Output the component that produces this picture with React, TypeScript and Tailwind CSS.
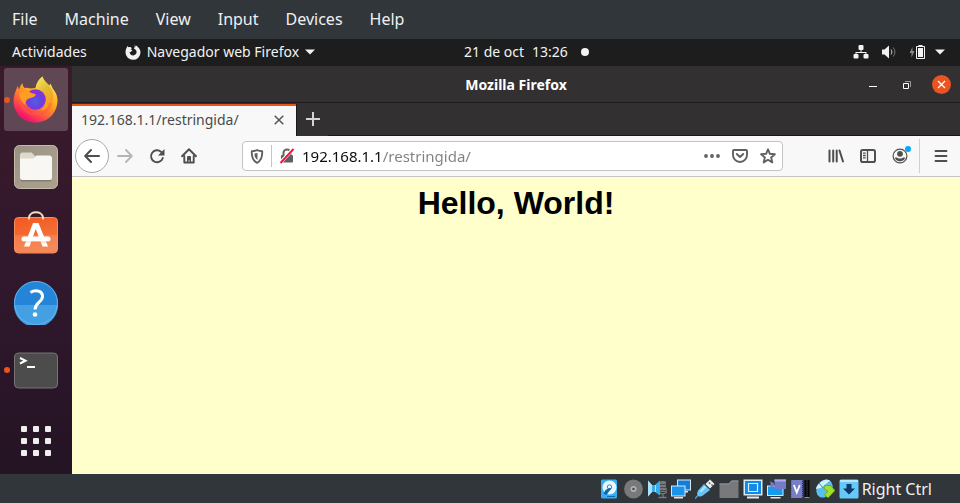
import { useState, type ReactNode } from "react";

const stroke = {
  fill: "none",
  stroke: "currentColor",
  strokeLinecap: "round",
  strokeLinejoin: "round",
} as const;

function HostMenu() {
  const items = ["File", "Machine", "View", "Input", "Devices", "Help"];
  return (
    <nav
      aria-label="Virtual machine"
      className="flex h-[39px] shrink-0 items-center gap-[27px] bg-[#31363b] px-3 pb-[2px] text-base text-[#eff0f1]"
    >
      {items.map((item) => (
        <button key={item} type="button">
          {item}
        </button>
      ))}
    </nav>
  );
}

function FirefoxGlyph() {
  return (
    <svg width="16" height="16" viewBox="0 0 16 16" aria-hidden="true">
      <path
        fill="#f2f2f2"
        d="M9.800.2c.4.900.6 1.600.7 2.500l1.500-1.300c.3.900.6 1.500 1.300 2.200 1.300 1.300 2.200 2.800 2.200 4.700A7.400 7.400 0 0 1 8 15.800 7.400 7.400 0 0 1 .5 8.500C.5 6 1.200 4 2.800 1.800c0 .6.1 1 .4 1.500C4 3 5 2.900 5.800 3.200L7 4.600c-.6.1-1.100.4-1.400.9.8.1 1.400.400 1.800.900L5.800 7.700c-.4.300-.8.200-1.200 0 0 2.300 1.500 3.700 3.500 3.700 2.100 0 3.600-1.500 3.500-3.600C11.500 6.200 10.500 5.200 9 4.700c.7-1.400.9-3 .8-4.500z"
      />
    </svg>
  );
}

function Caret() {
  return (
    <svg width="10" height="6" viewBox="0 0 10 6" aria-hidden="true">
      <path fill="#f2f2f2" d="M0 .5h10L5 5.500z" />
    </svg>
  );
}

function TopBar() {
  return (
    <header className="grid h-[27px] shrink-0 grid-cols-[464fr_125fr_371fr] items-center bg-[#1d1d1d] pb-px text-sm text-[#f2f2f2]">
      <div className="flex items-center gap-[38px] pl-3">
        <button type="button">Actividades</button>
        <button type="button" className="flex items-center gap-[6px] whitespace-nowrap">
          <FirefoxGlyph />
          Navegador web Firefox
          <Caret />
        </button>
      </div>
      <button type="button" className="flex items-center justify-between whitespace-nowrap">
        <span className="flex gap-2">
          <span>21 de oct</span>
          <span>13:26</span>
        </span>
        <span className="size-2 rounded-full bg-[#f2f2f2]" />
      </button>
      <button type="button" aria-label="Sistema" className="flex items-center justify-end pr-[15px]">
        <svg width="16" height="16" viewBox="0 0 16 16" fill="#f2f2f2" className="mr-3" aria-hidden="true">
          <rect x="5.500" y="1" width="5" height="5" rx="1" />
          <rect x=".5" y="10" width="5" height="4.500" rx="1" />
          <rect x="10.500" y="10" width="5" height="4.500" rx="1" />
          <path d="M7.500 5h1v3h5v3h-1V9h-9v2h-1V8h5z" />
        </svg>
        <svg width="16" height="16" viewBox="0 0 16 16" className="mr-3" aria-hidden="true">
          <path fill="#f2f2f2" d="M1 5.500h2.500L8 1.500v13l-4.500-4H1z" />
          <path fill="none" stroke="#c8c8c8" d="M10 5.500q2 2.500 0 5" />
          <path fill="none" stroke="#777" d="M12.200 3.500q3.500 4.500 0 9" />
        </svg>
        <svg width="16" height="16" viewBox="0 0 16 16" className="mr-[10px]" aria-hidden="true">
          <path fill="#888" d="M3.500 3v4H5.500L2.500 13.500V9H.5z" />
          <path fill="none" stroke="#f2f2f2" d="M7.500 2.500h8v12h-8zM9.500 1.500h4" />
          <path fill="#f2f2f2" d="M9 4h5v9H9z" />
        </svg>
        <Caret />
      </button>
    </header>
  );
}

function FirefoxLogo() {
  return (
    <svg width="46" height="48" viewBox="0 0 46 48" aria-hidden="true">
      <defs>
        <linearGradient id="flame" x1=".85" y1="0" x2=".25" y2="1">
          <stop offset="0" stopColor="#fff36e" />
          <stop offset=".4" stopColor="#ffb020" />
          <stop offset=".65" stopColor="#ff6a36" />
          <stop offset=".92" stopColor="#f5156c" />
        </linearGradient>
        <radialGradient id="globe" cx=".5" cy=".6" r=".65">
          <stop offset="0" stopColor="#4f5fe6" />
          <stop offset=".5" stopColor="#6a40df" />
          <stop offset="1" stopColor="#9a2ccb" />
        </radialGradient>
        <linearGradient id="crest" x1="0" y1="0" x2=".5" y2="1">
          <stop offset="0" stopColor="#f8ec62" />
          <stop offset=".5" stopColor="#e2bd35" />
          <stop offset="1" stopColor="#ff9a1f" />
        </linearGradient>
      </defs>
      <path
        fill="url(#flame)"
        d="M29.500.5c1 4 4 6 7 9l1-2c1 2 1.500 4 3 6 2.500 3 4 7 4 10.500C44.500 37 35 46.500 22.500 46.500S.5 37 .5 25C.5 19 3 14 5 9.500c0 2 .5 3 1 4 1-3 2-5 3.500-6.500 0 2 .5 3.500 2 5 2-.5 4 0 6 .5l5-.5c1-4.500 3-8.500 7-11.500z"
      />
      <path
        fill="url(#crest)"
        d="M29.500.5c1 4 5 7 8 11 5 7 3 17-3 21-3 2-5 2-6 1 4-3 5-7 4-12-1-5-6-8-10-9.500 1-5 3-8.500 7-11.500z"
      />
      <circle cx="22.500" cy="23.500" r="10.300" fill="url(#globe)" />
      <path fill="none" stroke="#ff5844" strokeWidth="3" d="M7 25c2 8 8 13 16 13 7 0 13-4 15-11" opacity=".5" />
      <path
        fill="#ff9d22"
        d="M6 18c3-3 7-4.500 10-2.500 2 1.500 4.500 2 7 3-1 2.500-3 3-5.500 3.500-4 1-5.500 3.500-5 7C9 27 7 23 6 18z"
      />
    </svg>
  );
}

function FilesLogo() {
  return (
    <svg width="46" height="46" viewBox="0 0 46 46" aria-hidden="true">
      <defs>
        <linearGradient id="drawer" x1="0" y1="0" x2="1" y2="1">
          <stop offset="0" stopColor="#989183" />
          <stop offset=".5" stopColor="#a49b8a" />
          <stop offset="1" stopColor="#aaa18f" />
        </linearGradient>
      </defs>
      <rect x="1.500" y="2.500" width="43" height="43" rx="5" fill="url(#drawer)" stroke="#c3bba9" />
      <path fill="#ded9cb" d="M7 12a2.500 2.500 0 0 1 2.500-2.500h9L23 14v10H7z" />
      <path fill="#6e685c" opacity=".6" d="M8 35h30v3.500H8z" />
      <path fill="#f8f7f4" d="M7 15.500h13.500l3-3H36a3 3 0 0 1 3 3v19a2.500 2.500 0 0 1-2.500 2.500h-27A2.500 2.500 0 0 1 7 34z" />
    </svg>
  );
}

function SoftwareLogo() {
  return (
    <svg width="46" height="46" viewBox="0 0 46 46" aria-hidden="true">
      <defs>
        <linearGradient id="bag" x1="0" y1="0" x2=".3" y2="1">
          <stop offset="0" stopColor="#f4581f" />
          <stop offset="1" stopColor="#f37a42" />
        </linearGradient>
      </defs>
      <rect x="1.500" y="6.500" width="43" height="35.500" rx="4" fill="url(#bag)" stroke="#f78e5f" />
      <path fill="#fff" opacity=".12" d="M2 24h42v14a3 3 0 0 1-3 3H5a3 3 0 0 1-3-3z" />
      <path fill="none" stroke="#f6dfb8" strokeWidth="2" d="M16 8.500V6.500c1-7 13-7 14 0v2" />
      <path fill="#fff" d="M20 12h5.500l9.500 23.500h-5.500L22.700 18 16.500 35.500H11z" />
      <rect x="8.500" y="25.500" width="29" height="5" rx="2.500" fill="#fff" />
      <path stroke="#f3743b" strokeWidth=".6" opacity=".6" d="M11 31h24" />
    </svg>
  );
}

function HelpLogo() {
  return (
    <svg width="46" height="46" viewBox="0 0 46 46" aria-hidden="true">
      <circle cx="23" cy="24" r="22" fill="#2484d8" />
      <path fill="#45a0e3" d="M1 26h44a22 22 0 0 1-44 0z" />
      <circle cx="23" cy="24" r="21.500" fill="none" stroke="#5fb4ee" />
      <path fill="none" stroke="#fff" strokeWidth="3" d="M17.500 13.500c3.500-2.500 12-3 12 4 0 5.500-7.500 6-7.500 13" />
      <circle cx="22" cy="35.500" r="2.300" fill="#fff" />
    </svg>
  );
}

function TerminalLogo() {
  return (
    <svg width="46" height="38" viewBox="0 0 46 38" aria-hidden="true">
      <rect x="1.500" y="2" width="43" height="35" rx="4" fill="#4c4c4c" stroke="#747474" />
      <path fill="none" stroke="#fff" strokeWidth="2" d="M7 7l5.500 2.700L7 12.500M14 16h8" />
    </svg>
  );
}

function DockItem({ label, running, children }: { label: string; running?: boolean; children: ReactNode }) {
  return (
    <button type="button" aria-label={label} className="relative flex h-[68px] items-center justify-center">
      {running && <span className="absolute left-1 size-[6px] rounded-full bg-[#e95420]" />}
      {children}
    </button>
  );
}

function Dock() {
  return (
    <aside
      aria-label="Dock"
      className="flex w-[72px] shrink-0 flex-col bg-linear-to-b from-[#3a1a2a] via-[#31182d] to-[#241424]"
    >
      <button
        type="button"
        aria-label="Firefox"
        className="relative mx-1 mt-[2px] mb-px flex h-[63px] items-center justify-center rounded-[3px] bg-white/20"
      >
        <span className="absolute left-0 size-[6px] rounded-full bg-[#e95420]" />
        <FirefoxLogo />
      </button>
      <DockItem label="Archivos">
        <FilesLogo />
      </DockItem>
      <DockItem label="Software de Ubuntu">
        <SoftwareLogo />
      </DockItem>
      <DockItem label="Ayuda">
        <HelpLogo />
      </DockItem>
      <DockItem label="Terminal" running>
        <TerminalLogo />
      </DockItem>
      <button type="button" aria-label="Mostrar aplicaciones" className="mt-auto flex h-[66px] items-center justify-center">
        <span className="grid grid-cols-3 gap-[6px]">
          {Array.from({ length: 9 }, (_, i) => (
            <span key={i} className="size-[6px] rounded-[1px] bg-[#eeeeec]" />
          ))}
        </span>
      </button>
    </aside>
  );
}

function TitleBar() {
  return (
    <div className="grid h-[37px] shrink-0 grid-cols-[1fr_auto_1fr] items-center border-b border-[#1f1c1d] bg-[#333031] pt-px text-white">
      <span />
      <span className="text-sm font-bold">Mozilla Firefox</span>
      <div className="flex items-center justify-end pr-[9px]">
        <button type="button" aria-label="Minimizar" className="flex w-[34px] justify-center">
          <svg width="10" height="10" viewBox="0 0 10 10" aria-hidden="true">
            <path stroke="#fff" d="M1 6.500h8" />
          </svg>
        </button>
        <button type="button" aria-label="Restaurar" className="flex w-[34px] justify-center">
          <svg width="10" height="10" viewBox="0 0 10 10" fill="none" aria-hidden="true">
            <path stroke="#fff" d="M1.500 3.500h5v5h-5z" />
            <path stroke="#999" d="M3 1.500h5.500V7" />
          </svg>
        </button>
        <button
          type="button"
          aria-label="Cerrar"
          className="ml-2 flex size-[19px] items-center justify-center rounded-full bg-[#e95420]"
        >
          <svg width="9" height="9" viewBox="0 0 9 9" aria-hidden="true">
            <path stroke="#fff" strokeWidth="1.300" d="M1 1l7 7M8 1L1 8" />
          </svg>
        </button>
      </div>
    </div>
  );
}

function TabStrip() {
  return (
    <div className="flex h-[33px] shrink-0 bg-[#333031] pt-px">
      <div className="flex w-[224px] items-center justify-between border-t-2 border-[#e95420] bg-[#f8f8f8] pr-3 pb-[2px] pl-[9px] text-sm text-[#4a4a4a]">
        <span>192.168.1.1/restringida/</span>
        <button type="button" aria-label="Cerrar pestaña">
          <svg width="10" height="10" viewBox="0 0 10 10" aria-hidden="true">
            <path stroke="#555" strokeWidth="1.500" d="M.7.7l8.600 8.600M9.300.7L.7 9.300" />
          </svg>
        </button>
      </div>
      <button
        type="button"
        aria-label="Nueva pestaña"
        className="flex w-8 items-center justify-center border-l border-[#1a1819] pb-[2px]"
      >
        <svg width="14" height="14" viewBox="0 0 14 14" aria-hidden="true">
          <path stroke="#d4d4d4" strokeWidth="2" d="M7 0v14M0 7h14" />
        </svg>
      </button>
      <div className="flex-1 border-b border-[#1a1819]" />
    </div>
  );
}

function ToolButton({ label, children }: { label: string; children: ReactNode }) {
  return (
    <button type="button" aria-label={label} className="relative flex h-8 w-8 shrink-0 items-center justify-center">
      {children}
    </button>
  );
}

function AddressBar() {
  const [address, setAddress] = useState("192.168.1.1/restringida/");
  return (
    <div className="mx-[37px] flex h-[30px] min-w-0 flex-1 items-center rounded-[4px] border border-[#c4c4c4] bg-white text-[#606060]">
      <button type="button" aria-label="Protección" className="flex w-7 justify-center">
        <svg width="14" height="15" viewBox="0 0 14 15" aria-hidden="true">
          <path {...stroke} strokeWidth="1.900" d="M7 1.200c2 .8 3.500 1 5.200 1 .3 6-.8 9.300-5.200 11.600C2.600 11.500 1.500 8.200 1.800 2.200c1.700 0 3.200-.2 5.200-1z" />
          <path fill="currentColor" d="M7.500 4v7C5.200 9.500 4.500 7.500 4.500 4.500z" />
        </svg>
      </button>
      <span className="h-[22px] w-px bg-[#c4c4c4]" />
      <button type="button" aria-label="Conexión no segura" className="flex w-[30px] justify-center">
        <svg width="16" height="16" viewBox="0 0 16 16" aria-hidden="true">
          <path fill="none" stroke="currentColor" strokeWidth="2" d="M4.500 8V5a3.500 3.500 0 0 1 7 0v3" />
          <rect x="2" y="7" width="12" height="7.500" rx="1" fill="currentColor" />
          <path stroke="#fff" strokeWidth="3.600" d="M1 15L14 1" />
          <path stroke="#f9103f" strokeWidth="1.900" d="M1.500 15L14.500 1" />
        </svg>
      </button>
      <input
        aria-label="Dirección"
        value={address}
        onChange={(event) => setAddress(event.target.value)}
        className="min-w-0 flex-1 bg-[linear-gradient(to_right,#0c0c0d_81px,#808080_81px)] bg-clip-text text-[15px] text-transparent caret-black outline-none"
      />
      <div className="flex">
        <button type="button" aria-label="Acciones de página" className="flex w-7 items-center justify-center">
          <svg width="16" height="4" viewBox="0 0 16 4" fill="currentColor" aria-hidden="true">
            <circle cx="2" cy="2" r="1.900" />
            <circle cx="8" cy="2" r="1.900" />
            <circle cx="14" cy="2" r="1.900" />
          </svg>
        </button>
        <button type="button" aria-label="Guardar en Pocket" className="flex w-7 items-center justify-center">
          <svg width="16" height="14" viewBox="0 0 16 14" aria-hidden="true">
            <path {...stroke} strokeWidth="1.900" d="M2 1h12a1 1 0 0 1 1 1v4a7 7 0 0 1-14 0V2a1 1 0 0 1 1-1z" />
            <path {...stroke} strokeWidth="1.900" d="M4.800 5L8 8l3.200-3" />
          </svg>
        </button>
        <button type="button" aria-label="Añadir a marcadores" className="flex w-7 items-center justify-center">
          <svg width="16" height="16" viewBox="0 0 16 16" aria-hidden="true">
            <path {...stroke} strokeWidth="1.900" d="M8 1.300l1.900 4.500 5 .4-3.800 3.200 1.200 5L8 11.700l-4.300 2.700 1.200-5L1.100 6.200l5-.4z" />
          </svg>
        </button>
      </div>
    </div>
  );
}

function Toolbar() {
  return (
    <div className="flex h-[41px] shrink-0 items-center border-b border-[#c4c4c8] bg-[#f8f8f8] px-[3px] text-[#4f4f4f]">
      <button
        type="button"
        aria-label="Atrás"
        className="flex size-[34px] shrink-0 items-center justify-center rounded-full border border-[#a8a8a8] bg-white"
      >
        <svg width="16" height="16" viewBox="0 0 16 16" aria-hidden="true">
          <path {...stroke} strokeWidth="2" d="M15 8H1.500M7 2L1.200 8 7 14" />
        </svg>
      </button>
      <ToolButton label="Adelante">
        <svg width="16" height="16" viewBox="0 0 16 16" className="text-[#b4b4b4]" aria-hidden="true">
          <path {...stroke} strokeWidth="1.800" d="M1 8h13.500M9 2l5.800 6L9 14" />
        </svg>
      </ToolButton>
      <ToolButton label="Recargar">
        <svg width="16" height="16" viewBox="0 0 16 16" aria-hidden="true">
          <path {...stroke} strokeWidth="1.900" d="M13.800 10A6 6 0 1 1 12 3.700l1.500 1.500" />
          <path fill="currentColor" d="M15.500 1v6.500H9z" />
        </svg>
      </ToolButton>
      <ToolButton label="Inicio">
        <svg width="16" height="16" viewBox="0 0 16 16" aria-hidden="true">
          <path {...stroke} strokeWidth="1.900" d="M1 8.200L8 1.300l7 6.900M3.300 8v6.500h9.400V8" />
          <path fill="currentColor" d="M6 14.500V9a1 1 0 0 1 1-1h2a1 1 0 0 1 1 1v5.500H8.800v-2H7.300v2z" />
        </svg>
      </ToolButton>
      <AddressBar />
      <ToolButton label="Biblioteca">
        <svg width="16" height="14" viewBox="0 0 16 14" aria-hidden="true">
          <path fill="none" stroke="currentColor" strokeWidth="2" strokeLinecap="round" d="M1.500 1.500v11M5.200 1.500v11M8.700 1.500v11M11.500 1.500L15 12.500" />
        </svg>
      </ToolButton>
      <ToolButton label="Barra lateral">
        <svg width="16" height="14" viewBox="0 0 16 14" aria-hidden="true">
          <rect x="1" y="1" width="14" height="12" rx="1.800" fill="none" stroke="currentColor" strokeWidth="2" />
          <path fill="none" stroke="currentColor" strokeWidth="1.300" d="M7.500 1v12M3 4.200h2.700M3 6.500h2.700M3 8.800h2.700" />
        </svg>
      </ToolButton>
      <ToolButton label="Cuenta">
        <svg width="16" height="16" viewBox="0 0 16 16" aria-hidden="true">
          <circle cx="8" cy="8" r="6.900" fill="none" stroke="currentColor" strokeWidth="1.200" />
          <circle cx="8" cy="5.800" r="2.900" fill="currentColor" />
          <path fill="currentColor" d="M3 9.500h2c1 1.300 5 1.300 6 0h2c0 2-2.300 3.800-5 3.800s-5-1.800-5-3.800z" />
        </svg>
        <span className="absolute top-[6px] right-[5px] size-[6px] rounded-full bg-[#00a8ff]" />
      </ToolButton>
      <span className="mr-[5px] ml-[3px] h-[34px] w-px self-center bg-[#d0d0d0]" />
      <ToolButton label="Menú">
        <svg width="14" height="12" viewBox="0 0 14 12" aria-hidden="true">
          <path {...stroke} strokeWidth="1.800" d="M1.500 1h11M1.500 6h11M1.500 11h11" />
        </svg>
      </ToolButton>
    </div>
  );
}

function StatusIcon({ label, children }: { label: string; children: ReactNode }) {
  return (
    <button type="button" aria-label={label} className="flex w-6 justify-center">
      <svg width="20" height="20" viewBox="0 0 20 20" aria-hidden="true">
        {children}
      </svg>
    </button>
  );
}

function StatusBar() {
  return (
    <footer className="flex h-[29px] shrink-0 items-center justify-end bg-[#31363b] pr-7 text-base text-[#eff0f1]">
      <StatusIcon label="Hard disk">
        <rect x="2" y=".5" width="16" height="19" rx="1.500" fill="#35aef5" />
        <circle cx="10.500" cy="8.500" r="7" fill="#e8f6fd" />
        <circle cx="10.500" cy="8" r="2.200" fill="none" stroke="#3a8cc0" />
        <path fill="#0b6bad" d="M12.500 9.500L10 12.500 7.500 16 4.500 14.500l2-3.500 4-2z" />
        <path fill="#0d6cab" d="M8 17h8v1H8z" />
      </StatusIcon>
      <StatusIcon label="Optical drive">
        <circle cx="10.500" cy="10" r="9.400" fill="#77797b" />
        <circle cx="10.500" cy="10" r="3" fill="#b1b3b4" />
        <circle cx="10.500" cy="10" r="1.300" fill="#4b4f52" />
      </StatusIcon>
      <StatusIcon label="Audio">
        <rect x="13" y="2" width="6" height="11" rx="1.500" fill="#77797b" />
        <path fill="none" stroke="#77797b" strokeWidth="1.300" d="M11 9v3.500q5 5 9 0V9M16 15v3M11.500 18.500h8" />
        <path stroke="#4b4f52" d="M13 5.500h6M13 8.500h6M13 11.500h6" />
        <path fill="#38acef" d="M1 1.500L5 6h3l5-4.500v15L8 13H5l-4 4.500z" />
        <path fill="#a9e2fc" d="M1 1.500L5 6v7l-4 4.500zM8 6h1v7H8z" />
      </StatusIcon>
      <StatusIcon label="Network">
        <path fill="#dbe8ef" d="M6 .5h14v11H6zM12 12h5v1.500h-5z" />
        <path fill="#127edb" d="M7 1.500h12v9H7z" />
        <path fill="#dbe8ef" d="M0 6.500h14.500v11H0zM3 18h9v1.500H3z" />
        <path fill="#1694ee" d="M1 7.500h12.500v9H1z" />
      </StatusIcon>
      <StatusIcon label="USB">
        <path fill="none" stroke="#3ba6e8" strokeWidth="1.500" d="M4.500 15L0 19.500" />
        <path fill="#64c5fa" d="M3.500 17c-2-1-1.500-4 0-6L9 5l6 6-6.500 5c-2 1.500-3.500 2-5 1z" />
        <path fill="#b9e5fc" d="M4.500 12.500L9.500 7l1.500 1.500-5 5z" />
        <path fill="#eceff0" d="M10.500 5L15 .5 19.500 5 15 9.500z" />
        <path fill="#555" d="M14.500 3l1.200 1.200-1 1L13.500 4zM17 5l1.200 1.200-1 1L16 6z" />
      </StatusIcon>
      <StatusIcon label="Shared folders">
        <path fill="#77797b" d="M.5 4.500h9.500L12.500 1.500h7v17.500H.5z" />
        <path stroke="#93979a" d="M.5 5h9.500l2.500-3h7" fill="none" />
      </StatusIcon>
      <StatusIcon label="Display">
        <path fill="#d9edf9" d="M.5.500h19v16H.5z" />
        <path fill="#1289e6" d="M2 2h16v13H2z" />
        <path fill="none" stroke="#d9edf9" strokeWidth="1.200" d="M5.500 4.500h9v8h-9z" />
        <path fill="#d9edf9" d="M4 17.500h12v2H4z" />
      </StatusIcon>
      <StatusIcon label="Recording">
        <path fill="#dbe8ef" d="M0 6.500h16.500v10.500H0zM3.500 18h10v1.500h-10z" />
        <path fill="#169af0" d="M1 7.500h14.500V16H1z" />
        <path fill="#747bc8" d="M7.500.5H19v9.500H7.500zM7 4.500L3.500 2v7L7 7z" />
        <path fill="#a9aeea" d="M7.500.5H19v2H7.500z" />
      </StatusIcon>
      <StatusIcon label="Processor">
        <path fill="#777fc9" d="M0 1h11v18H0z" />
        <path stroke="#5a63ab" strokeDasharray="1 1" d="M.5 1v18M11.500 1v18" />
        <path fill="none" stroke="#fff" strokeWidth="1.800" d="M2.800 6l3 7.500L8.800 6" />
        <path fill="#050606" d="M13.500 1h2v18h-2zM16.500 1h2v18h-2z" />
        <path fill="#12ed22" d="M13.500 18h5v1h-5z" />
      </StatusIcon>
      <StatusIcon label="Mouse integration">
        <ellipse cx="9.500" cy="9.500" rx="7.600" ry="9.600" transform="rotate(32 9.500 9.500)" fill="#58bff0" />
        <path fill="#d2f0fb" d="M6.500 2.500C9 .5 13 .3 15 1.500L6 9 .8 10C1.500 7 3.500 4.500 6.500 2.500z" />
        <path stroke="#3d92c0" fill="none" d="M4 4l4 5" />
        <path fill="#a2df28" stroke="#5f9e0a" strokeWidth=".7" d="M9.500 6.500h6l4.500 5-7 7.500-3.500-3.500 3.500-3-4-3z" />
      </StatusIcon>
      <StatusIcon label="Keyboard capture">
        <rect x=".5" y=".5" width="19" height="19" rx="1.500" fill="#67c9fa" />
        <path fill="#b8e7fd" d="M1 1h18v2H1z" />
        <path fill="#0a3a68" d="M7.500 5h5v4.500H16L10 15.500 4 9.500h3.500z" />
      </StatusIcon>
      <span className="ml-px">Right Ctrl</span>
    </footer>
  );
}

export default function App() {
  return (
    <div className="flex min-h-screen flex-col font-['Noto_Sans','Open_Sans',sans-serif]">
      <HostMenu />
      <TopBar />
      <div className="flex flex-1">
        <Dock />
        <div className="flex min-w-0 flex-1 flex-col">
          <TitleBar />
          <TabStrip />
          <Toolbar />
          <main className="flex-1 bg-[#ffffcc] pt-2 text-center font-['Liberation_Sans',Arial,sans-serif] text-black">
            <h1 className="text-[32px] leading-9 font-bold">Hello, World!</h1>
          </main>
        </div>
      </div>
      <StatusBar />
    </div>
  );
}
